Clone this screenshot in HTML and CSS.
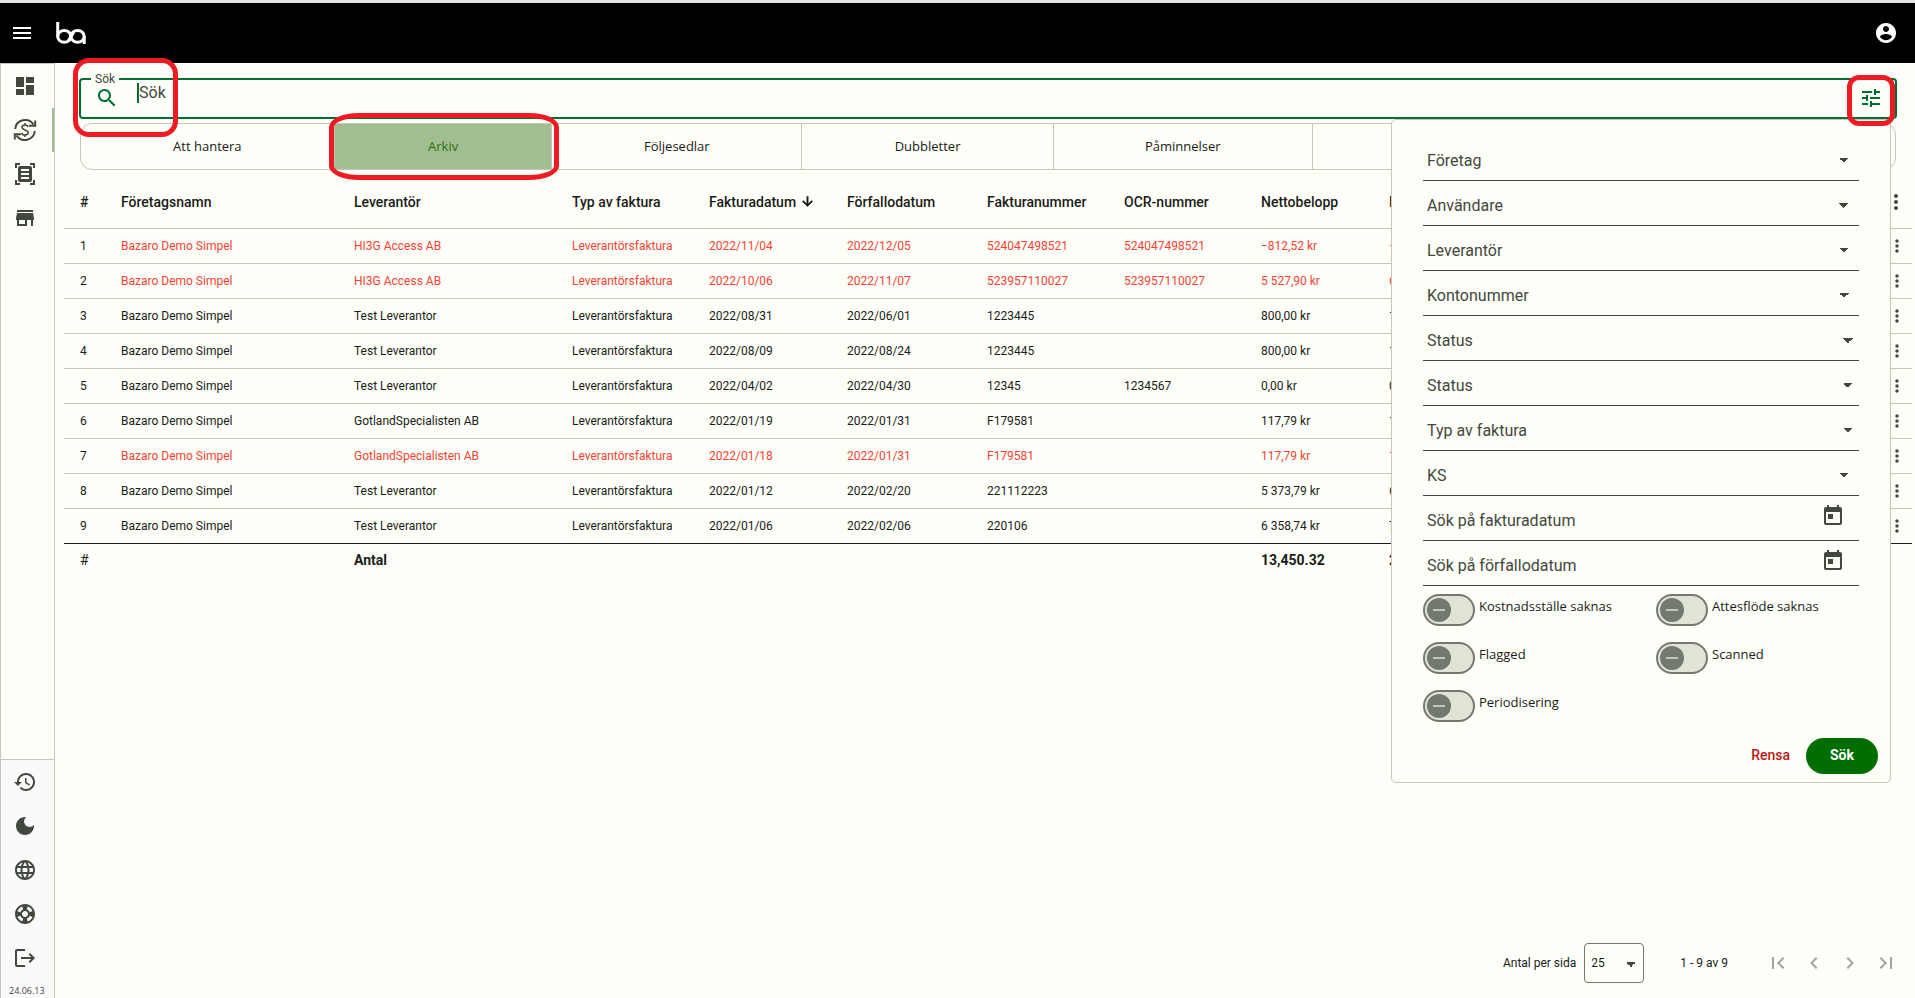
FILE: index.html
```html
<!DOCTYPE html>
<html lang="sv">
<head>
  <meta charset="UTF-8">
  <meta name="viewport" content="width=device-width, initial-scale=1.0">
  <title>Fakturor - Arkiv</title>
  <link rel="stylesheet" href="styles.css">
</head>
<body>
  <!-- shared icons -->
  <svg class="sprite" aria-hidden="true">
    <symbol id="dots" viewBox="0 0 24 24"><path d="M12 8c1.1 0 2-.9 2-2s-.9-2-2-2-2 .9-2 2 .9 2 2 2zm0 2c-1.100 0-2 .9-2 2s.9 2 2 2 2-.9 2-2-.9-2-2-2zm0 6c-1.100 0-2 .9-2 2s.9 2 2 2 2-.9 2-2-.9-2-2-2z"/></symbol>
    <symbol id="calendar" viewBox="0 0 24 24"><path d="M19 3h-1V1h-2v2H8V1H6v2H5c-1.110 0-1.990.9-1.990 2L3 19c0 1.100.89 2 2 2h14c1.100 0 2-.9 2-2V5c0-1.100-.9-2-2-2zm0 16H5V8h14v11zM7 10h5v5H7z"/></symbol>
  </svg>

  <header class="topbar">
    <button class="icon-button" aria-label="Meny">
      <svg class="icon" viewBox="0 0 24 24"><path d="M3 18h18v-2H3v2zm0-5h18v-2H3v2zm0-7v2h18V6H3z"/></svg>
    </button>
    <a href="#" class="logo" aria-label="ba">
      <svg viewBox="0 0 30 22"><path d="M1.700 0V14.500"/><ellipse cx="8.300" cy="14.400" rx="6.600" ry="5.900"/><ellipse cx="21.600" cy="14.400" rx="6.600" ry="5.900"/><path d="M28.200 14V22M12.500 18.500L17.500 10.500"/></svg>
    </a>
    <button class="icon-button account" aria-label="Konto">
      <svg class="icon" viewBox="0 0 24 24"><path d="M12 2C6.480 2 2 6.480 2 12s4.480 10 10 10 10-4.480 10-10S17.520 2 12 2zm0 3c1.660 0 3 1.340 3 3s-1.340 3-3 3-3-1.340-3-3 1.340-3 3-3zm0 14.200c-2.500 0-4.710-1.280-6-3.220.03-1.990 4-3.080 6-3.080 1.990 0 5.970 1.090 6 3.080-1.290 1.940-3.500 3.220-6 3.220z"/></svg>
    </button>
  </header>

  <div class="layout">
    <nav class="sidebar">
      <div class="side-group">
        <a href="#" class="side-link" aria-label="Översikt"><svg class="icon" viewBox="0 0 24 24"><path d="M3 13h8V3H3v10zm0 8h8v-6H3v6zm10 0h8V11h-8v10zm0-18v6h8V3h-8z"/></svg></a>
        <a href="#" class="side-link active" aria-label="Fakturor"><svg class="icon stroked" viewBox="0 0 24 24"><path d="M2.200 11A10 10 0 0 1 20.500 6.500M21.800 13A10 10 0 0 1 3.500 17.500"/><path d="M16 7.800h6.200V2.500M8 16.200H1.800v5.300"/><path class="thin" d="M15 9c-.3-1.300-1.300-2-3-2-1.800 0-3 .9-3 2.300 0 3.400 6.200 1.900 6.200 5.300 0 1.500-1.300 2.400-3.200 2.400-1.800 0-3-.8-3.200-2.200M12 5v2M12 17v2"/></svg></a>
        <a href="#" class="side-link" aria-label="Skanna"><svg class="icon" viewBox="0 0 24 24"><path d="M2 1h5v2H4v3H2zM17 1h5v5h-2V3h-3zM2 18h2v3h3v2H2zM20 18h2v5h-5v-2h3z"/><path fill-rule="evenodd" d="M7 4h10a2 2 0 0 1 2 2v12a2 2 0 0 1-2 2H7a2 2 0 0 1-2-2V6a2 2 0 0 1 2-2zm1 3v2h8V7zm0 4v2h8v-2zm0 4v2h8v-2z"/></svg></a>
        <a href="#" class="side-link" aria-label="Butik"><svg class="icon" viewBox="0 0 24 24"><path d="M20 4H4v2h16V4zm1 10v-2l-1-5H4l-1 5v2h1v6h10v-6h4v6h2v-6h1zm-9 4H6v-4h6v4z"/></svg></a>
      </div>
      <div class="side-group bottom">
        <a href="#" class="side-link" aria-label="Historik"><svg class="icon" viewBox="0 0 24 24"><path d="M13 3c-4.970 0-9 4.030-9 9H1l3.890 3.890.07.14L9 12H6c0-3.870 3.130-7 7-7s7 3.130 7 7-3.130 7-7 7c-1.930 0-3.680-.79-4.940-2.060l-1.420 1.420C8.270 19.990 10.510 21 13 21c4.970 0 9-4.030 9-9s-4.030-9-9-9zm-1 5v5l4.280 2.540.72-1.210-3.500-2.080V8H12z"/></svg></a>
        <a href="#" class="side-link" aria-label="Mörkt läge"><svg class="icon" viewBox="0 0 24 24"><path d="M12 3c-4.970 0-9 4.030-9 9s4.030 9 9 9 9-4.030 9-9c0-.46-.04-.92-.1-1.360-.98 1.370-2.580 2.260-4.400 2.260-2.980 0-5.400-2.420-5.400-5.400 0-1.810.89-3.420 2.260-4.400C12.920 3.040 12.460 3 12 3z"/></svg></a>
        <a href="#" class="side-link" aria-label="Språk"><svg class="icon" viewBox="0 0 24 24"><path d="M11.990 2C6.470 2 2 6.480 2 12s4.470 10 9.990 10C17.520 22 22 17.520 22 12S17.520 2 11.990 2zm6.930 6h-2.950c-.32-1.250-.78-2.450-1.380-3.560 1.840.63 3.370 1.910 4.330 3.560zM12 4.040c.83 1.200 1.480 2.530 1.910 3.960h-3.820c.43-1.430 1.080-2.760 1.910-3.960zM4.260 14C4.100 13.360 4 12.690 4 12s.1-1.360.26-2h3.380c-.08.66-.14 1.320-.14 2s.06 1.340.14 2H4.260zm.82 2h2.950c.32 1.250.78 2.450 1.380 3.560-1.840-.63-3.370-1.900-4.330-3.560zm2.950-8H5.080c.96-1.660 2.490-2.930 4.330-3.560C8.810 5.550 8.350 6.750 8.030 8zM12 19.960c-.83-1.200-1.480-2.530-1.910-3.960h3.820c-.43 1.430-1.080 2.760-1.910 3.960zM14.340 14H9.660c-.09-.66-.16-1.320-.16-2s.07-1.350.16-2h4.680c.09.65.16 1.320.16 2s-.07 1.340-.16 2zm.25 5.560c.6-1.110 1.060-2.310 1.380-3.560h2.950c-.96 1.650-2.490 2.930-4.330 3.560zM16.360 14c.08-.66.14-1.320.14-2s-.06-1.340-.14-2h3.380c.16.64.26 1.310.26 2s-.1 1.360-.26 2h-3.380z"/></svg></a>
        <a href="#" class="side-link" aria-label="Support"><svg class="icon" viewBox="0 0 24 24"><path d="M12 2C6.480 2 2 6.480 2 12s4.480 10 10 10 10-4.480 10-10S17.520 2 12 2zm7.460 7.120l-2.780 1.150c-.51-1.360-1.580-2.440-2.950-2.940l1.150-2.780c2.100.8 3.770 2.470 4.580 4.570zM12 15c-1.660 0-3-1.340-3-3s1.340-3 3-3 3 1.340 3 3-1.340 3-3 3zM9.130 4.540l1.170 2.780c-1.380.5-2.470 1.590-2.980 2.970L4.540 9.130c.81-2.110 2.480-3.780 4.590-4.590zM4.540 14.870l2.780-1.150c.51 1.380 1.590 2.460 2.970 2.960l-1.170 2.780c-2.100-.81-3.770-2.480-4.580-4.590zm10.340 4.590l-1.150-2.780c1.370-.51 2.450-1.590 2.950-2.970l2.780 1.170c-.81 2.100-2.480 3.770-4.580 4.580z"/></svg></a>
        <a href="#" class="side-link" aria-label="Logga ut"><svg class="icon" viewBox="0 0 24 24"><path d="M4 3h8v2H4v14h8v2H4a2 2 0 0 1-2-2V5c0-1.100.9-2 2-2zM17 7l-1.410 1.410L18.170 11H8v2h10.170l-2.580 2.590L17 17l5-5z"/></svg></a>
        <span class="version">24.06.13</span>
      </div>
    </nav>

    <main class="content">
      <fieldset class="search">
        <legend><label for="search">Sök</label></legend>
        <svg class="icon" viewBox="0 0 24 24"><path d="M15.500 14h-.79l-.28-.27C15.410 12.590 16 11.110 16 9.500 16 5.910 13.090 3 9.500 3S3 5.910 3 9.500 5.910 16 9.500 16c1.610 0 3.090-.59 4.230-1.570l.27.28v.79l5 4.990L20.490 19l-4.990-5zm-6 0C7.010 14 5 11.990 5 9.500S7.010 5 9.500 5 14 7.010 14 9.500 11.990 14 9.500 14z"/></svg>
        <input id="search" type="text" placeholder="Sök">
        <button class="icon-button filter-button" aria-label="Filter">
          <svg class="icon" viewBox="0 0 24 24"><path d="M3 17v2h6v-2H3zM3 5v2h10V5H3zm10 16v-2h8v-2h-8v-2h-2v6h2zM7 9v2H3v2h4v2h2V9H7zm14 4v-2H11v2h10zm-6-4h2V7h4V5h-4V3h-2v6z"/></svg>
        </button>
      </fieldset>

      <div class="tabs">
        <button class="tab">Att hantera</button>
        <button class="tab selected">Arkiv</button>
        <button class="tab">Följesedlar</button>
        <button class="tab">Dubbletter</button>
        <button class="tab">Påminnelser</button>
        <button class="tab" aria-label="Fler"></button>
      </div>

      <table class="invoices">
        <colgroup>
          <col class="c-nr"><col class="c-company"><col class="c-supplier"><col class="c-type"><col class="c-date"><col class="c-due">
          <col class="c-number"><col class="c-ocr"><col class="c-net"><col><col class="c-menu">
        </colgroup>
        <thead>
          <tr>
            <th>#</th><th>Företagsnamn</th><th>Leverantör</th><th>Typ av faktura</th>
            <th><span class="sorted">Fakturadatum <svg class="sort" viewBox="0 0 24 24"><path d="M20 12l-1.410-1.410L13 16.170V4h-2v12.170l-5.580-5.590L4 12l8 8 8-8z"/></svg></span></th>
            <th>Förfallodatum</th><th>Fakturanummer</th><th>OCR-nummer</th><th>Nettobelopp</th><th>Bruttobelopp</th>
            <th><button class="icon-button" aria-label="Kolumner"><svg class="icon"><use href="#dots"/></svg></button></th>
          </tr>
        </thead>
        <tbody>
          <tr class="overdue"><td>1</td><td>Bazaro Demo Simpel</td><td>HI3G Access AB</td><td>Leverantörsfaktura</td><td>2022/11/04</td><td>2022/12/05</td><td>524047498521</td><td>524047498521</td><td>−812,52 kr</td><td>−1 015,65 kr</td><td><button class="icon-button small" aria-label="Meny"><svg><use href="#dots"/></svg></button></td></tr>
          <tr class="overdue"><td>2</td><td>Bazaro Demo Simpel</td><td>HI3G Access AB</td><td>Leverantörsfaktura</td><td>2022/10/06</td><td>2022/11/07</td><td>523957110027</td><td>523957110027</td><td>5 527,90 kr</td><td>6 909,88 kr</td><td><button class="icon-button small" aria-label="Meny"><svg><use href="#dots"/></svg></button></td></tr>
          <tr><td>3</td><td>Bazaro Demo Simpel</td><td>Test Leverantor</td><td>Leverantörsfaktura</td><td>2022/08/31</td><td>2022/06/01</td><td>1223445</td><td></td><td>800,00 kr</td><td>1 000,00 kr</td><td><button class="icon-button small" aria-label="Meny"><svg><use href="#dots"/></svg></button></td></tr>
          <tr><td>4</td><td>Bazaro Demo Simpel</td><td>Test Leverantor</td><td>Leverantörsfaktura</td><td>2022/08/09</td><td>2022/08/24</td><td>1223445</td><td></td><td>800,00 kr</td><td>1 000,00 kr</td><td><button class="icon-button small" aria-label="Meny"><svg><use href="#dots"/></svg></button></td></tr>
          <tr><td>5</td><td>Bazaro Demo Simpel</td><td>Test Leverantor</td><td>Leverantörsfaktura</td><td>2022/04/02</td><td>2022/04/30</td><td>12345</td><td>1234567</td><td>0,00 kr</td><td>0,00 kr</td><td><button class="icon-button small" aria-label="Meny"><svg><use href="#dots"/></svg></button></td></tr>
          <tr><td>6</td><td>Bazaro Demo Simpel</td><td>GotlandSpecialisten AB</td><td>Leverantörsfaktura</td><td>2022/01/19</td><td>2022/01/31</td><td>F179581</td><td></td><td>117,79 kr</td><td>147,24 kr</td><td><button class="icon-button small" aria-label="Meny"><svg><use href="#dots"/></svg></button></td></tr>
          <tr class="overdue"><td>7</td><td>Bazaro Demo Simpel</td><td>GotlandSpecialisten AB</td><td>Leverantörsfaktura</td><td>2022/01/18</td><td>2022/01/31</td><td>F179581</td><td></td><td>117,79 kr</td><td>147,24 kr</td><td><button class="icon-button small" aria-label="Meny"><svg><use href="#dots"/></svg></button></td></tr>
          <tr><td>8</td><td>Bazaro Demo Simpel</td><td>Test Leverantor</td><td>Leverantörsfaktura</td><td>2022/01/12</td><td>2022/02/20</td><td>221112223</td><td></td><td>5 373,79 kr</td><td>6 717,24 kr</td><td><button class="icon-button small" aria-label="Meny"><svg><use href="#dots"/></svg></button></td></tr>
          <tr><td>9</td><td>Bazaro Demo Simpel</td><td>Test Leverantor</td><td>Leverantörsfaktura</td><td>2022/01/06</td><td>2022/02/06</td><td>220106</td><td></td><td>6 358,74 kr</td><td>7 948,43 kr</td><td><button class="icon-button small" aria-label="Meny"><svg><use href="#dots"/></svg></button></td></tr>
        </tbody>
        <tfoot>
          <tr><td>#</td><td></td><td>Antal</td><td></td><td></td><td></td><td></td><td></td><td>13,450.32</td><td>26,812.90</td><td></td></tr>
        </tfoot>
      </table>

      <footer class="paginator">
        <label for="pageSize">Antal per sida</label>
        <select id="pageSize" class="page-size"><option>25</option></select>
        <span class="range">1 - 9 av 9</span>
        <div class="pager">
          <button class="icon-button" aria-label="Första sidan"><svg class="icon" viewBox="0 0 24 24"><path d="M18.410 16.590L13.820 12l4.590-4.590L17 6l-6 6 6 6zM6 6h2v12H6z"/></svg></button>
          <button class="icon-button" aria-label="Föregående sida"><svg class="icon" viewBox="0 0 24 24"><path d="M15.410 7.410L14 6l-6 6 6 6 1.410-1.410L10.830 12z"/></svg></button>
          <button class="icon-button" aria-label="Nästa sida"><svg class="icon" viewBox="0 0 24 24"><path d="M10 6L8.590 7.410 13.170 12l-4.580 4.590L10 18l6-6z"/></svg></button>
          <button class="icon-button" aria-label="Sista sidan"><svg class="icon" viewBox="0 0 24 24"><path d="M5.590 7.410L10.180 12l-4.590 4.590L7 18l6-6-6-6zM16 6h2v12h-2z"/></svg></button>
        </div>
      </footer>

      <form class="filter-panel">
        <select class="field" aria-label="Företag"><option>Företag</option></select>
        <select class="field" aria-label="Användare"><option>Användare</option></select>
        <select class="field" aria-label="Leverantör"><option>Leverantör</option></select>
        <select class="field" aria-label="Kontonummer"><option>Kontonummer</option></select>
        <select class="field wide" aria-label="Status"><option>Status</option></select>
        <select class="field wide" aria-label="Status"><option>Status</option></select>
        <select class="field wide" aria-label="Typ av faktura"><option>Typ av faktura</option></select>
        <select class="field" aria-label="KS"><option>KS</option></select>
        <div class="field date">
          <input type="text" placeholder="Sök på fakturadatum" aria-label="Sök på fakturadatum">
          <button type="button" class="icon-button" aria-label="Välj fakturadatum"><svg class="icon"><use href="#calendar"/></svg></button>
        </div>
        <div class="field date">
          <input type="text" placeholder="Sök på förfallodatum" aria-label="Sök på förfallodatum">
          <button type="button" class="icon-button" aria-label="Välj förfallodatum"><svg class="icon"><use href="#calendar"/></svg></button>
        </div>
        <div class="toggles">
          <label class="toggle"><input type="checkbox" role="switch"><span>Kostnadsställe saknas</span></label>
          <label class="toggle"><input type="checkbox" role="switch"><span>Attesflöde saknas</span></label>
          <label class="toggle"><input type="checkbox" role="switch"><span>Flagged</span></label>
          <label class="toggle"><input type="checkbox" role="switch"><span>Scanned</span></label>
          <label class="toggle"><input type="checkbox" role="switch"><span>Periodisering</span></label>
        </div>
        <div class="actions">
          <button type="reset" class="clear">Rensa</button>
          <button type="button" class="submit">Sök</button>
        </div>
      </form>
    </main>
  </div>

  <!-- highlights -->
  <div class="mark mark-search"></div>
  <div class="mark mark-archive"></div>
  <div class="mark mark-filter"></div>
</body>
</html>
```
FILE: styles.css
```css
:root {
  --surface: #fdfef7;
  --text: #1a1c18;
  --text-soft: #43483e;
  --line: #c3c8bb;
  --outline: #74796d;
  --green: #006e34;
  --overdue: #f44336;
  --mark: #ed1c24;
}
* {
  box-sizing: border-box;
}
body {
  margin: 0;
  min-height: 100vh;
  display: flex;
  flex-direction: column;
  font-family: Roboto, "Liberation Sans", sans-serif;
  font-size: 14px;
  color: var(--text);
  background-color: var(--surface);
}
button, input, select {
  font: inherit;
  color: inherit;
  background: none;
  border: none;
  margin: 0;
  padding: 0;
  outline: none;
}
.sprite {
  position: absolute;
  width: 0;
  height: 0;
}
.icon {
  display: block;
  width: 24px;
  height: 24px;
  fill: currentColor;
}
.stroked {
  fill: none;
  stroke: currentColor;
  stroke-width: 2;
  overflow: visible;
}
.thin {
  stroke-width: 1.5;
}
.icon-button {
  display: flex;
  align-items: center;
  justify-content: center;
  cursor: pointer;
}

/* top bar */
.topbar {
  display: flex;
  align-items: center;
  height: 63px;
  padding: 0 17px 0 10px;
  border-top: 3px solid #e4e4e4;
  background-color: #000;
  color: #fff;
}
.logo {
  margin-left: 22px;
}
.logo svg {
  display: block;
  width: 30px;
  height: 22px;
  fill: none;
  stroke: #fff;
  stroke-width: 3;
}
.account {
  margin-left: auto;
}

/* sidebar */
.layout {
  flex: 1;
  display: flex;
}
.sidebar {
  width: 55px;
  flex-shrink: 0;
  display: flex;
  flex-direction: column;
  justify-content: space-between;
  border: 1px solid var(--line);
  border-bottom: none;
  color: var(--text-soft);
}
.side-group {
  display: flex;
  flex-direction: column;
}
.side-link {
  display: flex;
  align-items: center;
  height: 44px;
  padding-left: 12px;
  color: inherit;
}
.side-link.active {
  border-right: 2px solid #a0be8f;
}
.bottom {
  border-top: 1px solid var(--line);
  background-color: #fafafa;
}
.version {
  padding: 3px 0 0 8px;
  font-family: "Open Sans", sans-serif;
  font-size: 9px;
  line-height: 15px;
}

/* content */
.content {
  position: relative;
  flex: 1;
  min-width: 0;
  display: flex;
  flex-direction: column;
}
.search {
  display: flex;
  align-items: flex-start;
  height: 44px;
  margin: 12px 18px 0 24px;
  padding: 0 12px 0 14px;
  border: 2px solid var(--green);
  border-radius: 4px;
  color: var(--green);
}
.search legend {
  margin-left: -4px;
  padding: 0 4px;
  font-size: 12px;
  line-height: 8px;
  color: var(--text-soft);
}
.search .icon {
  margin-top: 3px;
}
.search input {
  flex: 1;
  height: 20px;
  margin-left: 18px;
  padding-bottom: 2px;
  border-left: 2px solid var(--green);
  font-size: 16px;
}
.search input::placeholder,
.date input::placeholder {
  color: var(--text-soft);
  opacity: 1;
}

.tabs {
  display: grid;
  grid-template-columns: 254fr 218fr 250fr 252fr 259fr 583fr;
  height: 47px;
  margin: 4px 19px 0 25px;
  border: 1px solid var(--line);
  border-radius: 12px;
  overflow: hidden;
}
.tab {
  padding-bottom: 2px;
  border-right: 1px solid var(--line);
  font-family: "Open Sans", sans-serif;
  font-size: 13px;
  font-weight: 500;
  cursor: pointer;
}
.tab:last-child {
  border-right: none;
}
.tab.selected {
  background-color: #a0be8f;
  color: #2e7011;
}

.invoices {
  table-layout: fixed;
  width: auto;
  margin: 6px 3px 0 9px;
  border-collapse: collapse;
  text-align: left;
  white-space: nowrap;
}
.c-nr { width: 57px; }
.c-company { width: 233px; }
.c-supplier { width: 218px; }
.c-type { width: 137px; }
.c-date { width: 138px; }
.c-due { width: 140px; }
.c-number { width: 137px; }
.c-ocr { width: 137px; }
.c-net { width: 128px; }
.c-menu { width: 28px; }
.invoices th,
.invoices td {
  padding: 0;
}
.invoices th:first-child,
.invoices td:first-child {
  padding-left: 16px;
}
.invoices th {
  height: 52px;
  font-size: 14px;
  font-weight: 500;
}
.invoices tbody td {
  height: 35px;
  border-top: 1px solid var(--line);
  font-size: 12px;
}
.invoices tbody tr:last-child td {
  border-bottom: 1px solid var(--text);
}
.invoices tfoot td {
  height: 34px;
  font-weight: 700;
}
.invoices tfoot td:first-child {
  font-weight: 400;
}
.overdue td {
  color: var(--overdue);
}
.overdue td:first-child,
.overdue td:last-child {
  color: var(--text);
}
.sorted {
  display: flex;
  align-items: center;
  gap: 4px;
}
.sort {
  width: 15px;
  height: 15px;
  fill: currentColor;
  stroke: currentColor;
}
.invoices .icon-button {
  width: 24px;
  color: var(--text-soft);
}
.invoices .small {
  width: 26px;
}
.small svg {
  width: 20px;
  height: 20px;
  fill: currentColor;
}

/* paginator */
.paginator {
  display: flex;
  align-items: center;
  height: 40px;
  margin: auto 11px 15px 0;
  justify-content: flex-end;
  font-size: 12px;
}
.page-size {
  width: 60px;
  height: 40px;
  margin: 0 36px 0 8px;
  padding-left: 6px;
  border: 1px solid var(--outline);
  border-radius: 4px;
  appearance: none;
}
.pager {
  display: flex;
  margin-left: 32px;
  color: #a3a49e;
}
.pager .icon-button {
  width: 36px;
  height: 36px;
}

/* filter panel, opens below the search field */
.filter-panel {
  position: absolute;
  top: 56px;
  right: 24px;
  width: 500px;
  padding: 16px 31px 8px;
  border: 1px solid var(--line);
  border-radius: 5px;
  background-color: var(--surface);
}
.field {
  display: block;
  width: 100%;
  height: 45px;
  padding: 5px 4px 0;
  border-bottom: 1px solid var(--text-soft);
  appearance: none;
  font-size: 16px;
  color: var(--text-soft);
}
select.field,
.page-size {
  background: linear-gradient(to top right, transparent 50%, var(--text-soft) 0) right 15px top 22px / 5px 5px no-repeat,
    linear-gradient(to top left, transparent 50%, var(--text-soft) 0) right 10px top 22px / 5px 5px no-repeat;
}
select.field.wide {
  background-position: right 11px top 22px, right 6px top 22px;
}
.page-size {
  background-position: right 12px top 18px, right 7px top 18px;
}
.date {
  display: flex;
  align-items: center;
  padding-right: 14px;
}
.date input {
  flex: 1;
}
.date .icon-button {
  margin-bottom: 9px;
}
.toggles {
  display: grid;
  grid-template-columns: 233px 1fr;
  gap: 16px 0;
  padding-top: 8px;
}
.toggle {
  display: flex;
  gap: 4px;
  height: 32px;
  font-family: "Open Sans", sans-serif;
  font-size: 13px;
  line-height: 24px;
}
.toggle input {
  appearance: none;
  width: 52px;
  height: 32px;
  padding: 2px;
  border: 2px solid var(--outline);
  border-radius: 16px;
  background-color: #e0e4d6;
}
.toggle input::before {
  content: "";
  display: block;
  width: 24px;
  height: 24px;
  border-radius: 50%;
  background: linear-gradient(#c3c8bb, #c3c8bb) center / 12px 2px no-repeat var(--outline);
}
.actions {
  display: flex;
  justify-content: flex-end;
  gap: 16px;
  margin: 16px -19px 0 0;
}
.clear {
  padding-bottom: 2px;
  font-weight: 500;
  color: #ba1a1a;
}
.submit {
  width: 72px;
  height: 36px;
  padding-bottom: 2px;
  border-radius: 18px;
  background-color: #006e00;
  color: #fff;
  font-weight: 700;
}

/* highlights */
.mark {
  position: absolute;
  border: 5px solid var(--mark);
  pointer-events: none;
}
.mark-search {
  top: 58px;
  left: 73px;
  width: 105px;
  height: 79px;
  border-radius: 16px;
}
.mark-archive {
  top: 113px;
  left: 329px;
  width: 230px;
  height: 67px;
  border-radius: 30px / 14px;
}
.mark-filter {
  top: 75px;
  right: 20px;
  width: 48px;
  height: 51px;
  border-radius: 12px;
}
```
